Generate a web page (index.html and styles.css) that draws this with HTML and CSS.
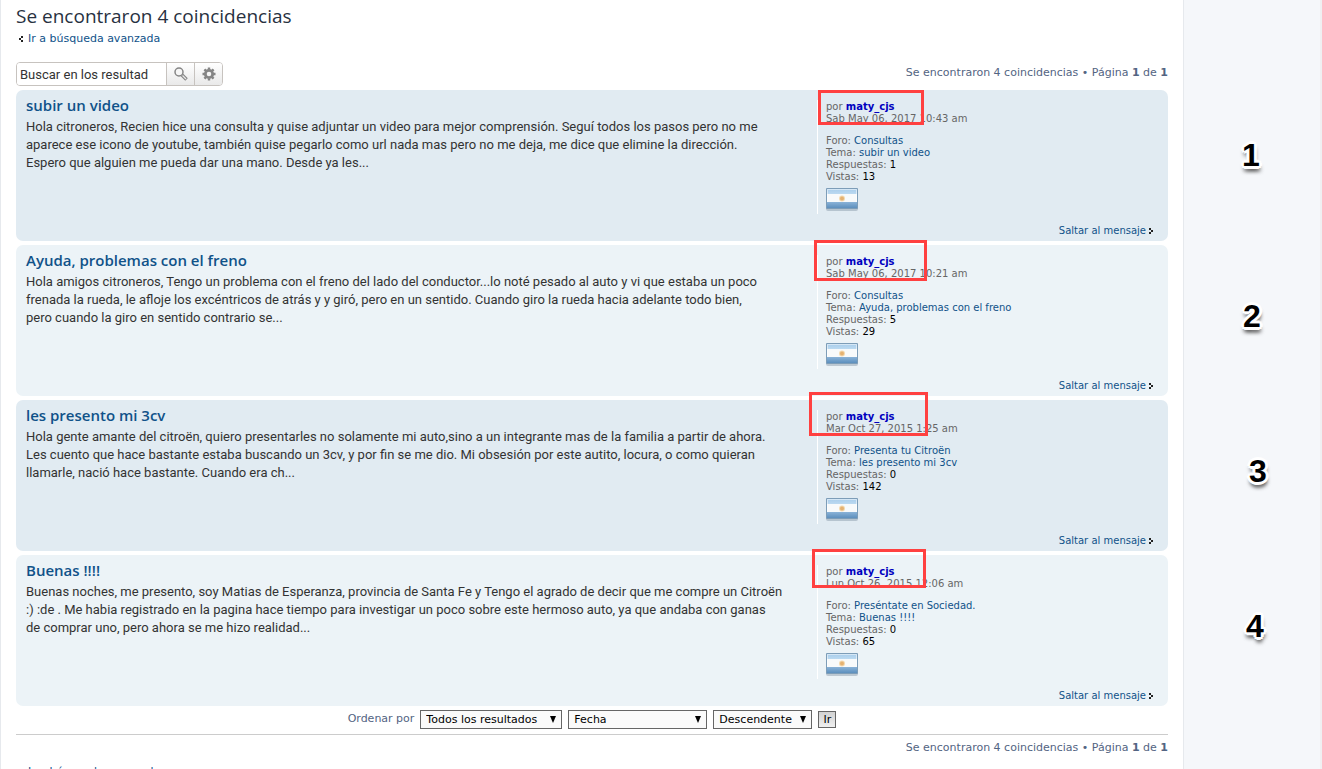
FILE: index.html
```html
<!DOCTYPE html>
<html lang="es">
<head>
<meta charset="utf-8">
<title>Se encontraron 4 coincidencias</title>
<link rel="stylesheet" href="styles.css">
</head>
<body>
<svg class="defs" aria-hidden="true">
  <defs>
    <linearGradient id="sky-top" x1="0" y1="0" x2="0" y2="1"><stop offset="0" stop-color="#a9cdeb"/><stop offset="1" stop-color="#bfdcf2"/></linearGradient>
    <linearGradient id="sky-bottom" x1="0" y1="0" x2="0" y2="1"><stop offset="0" stop-color="#8ab3d8"/><stop offset="1" stop-color="#5d8fbd"/></linearGradient>
  </defs>
  <symbol id="flag" viewBox="0 0 32 24">
    <rect x="0" y="2" width="32" height="21" rx="2" fill="#8395a3" opacity=".45"/>
    <rect x="0" y="0" width="32" height="21" rx="1" fill="#7d9db8"/>
    <rect x="1" y="1" width="30" height="6" fill="url(#sky-top)"/>
    <rect x="1" y="6" width="30" height="9" fill="#f8fafb"/>
    <rect x="1" y="14" width="30" height="6" fill="url(#sky-bottom)"/>
    <path d="M1.500 14V1.500h29V14" fill="none" stroke="#fff" opacity=".5"/>
    <circle cx="16" cy="10.500" r="3" fill="#f4d9ae"/>
    <circle cx="16" cy="10.500" r="2" fill="#e5b272"/>
  </symbol>
  <symbol id="arrow-left" viewBox="0 0 4 6"><path d="M2 0h2v2H2zM0 2h2v2H0zM2 4h2v2H2z" fill="#222"/></symbol>
  <symbol id="arrow-right" viewBox="0 0 4 6"><path d="M0 0h2v2H0zM2 2h2v2H2zM0 4h2v2H0z" fill="#222"/></symbol>
</svg>
<div class="layout">
<main class="page">
  <h2 class="heading">Se encontraron 4 coincidencias</h2>
  <a class="back" href="#"><svg class="arrow"><use href="#arrow-left"/></svg>Ir a búsqueda avanzada</a>

  <div class="action-bar">
    <form class="search">
      <input class="search-input" type="text" aria-label="Buscar en los resultados" value="Buscar en los resultad">
      <button class="search-button" type="button" aria-label="Buscar">
        <svg width="16" height="16" viewBox="0 0 16 16"><circle cx="6" cy="6" r="4" fill="#f6f6f6" stroke="#858585" stroke-width="1.500"/><path d="M9 9l4.500 4.500" stroke="#858585" stroke-width="3.500"/><path d="M9.500 9.500l3.500 3.500" stroke="#e8e8e8" stroke-width="1.200"/></svg>
      </button>
      <button class="search-button" type="button" aria-label="Búsqueda avanzada">
        <svg width="14" height="14" viewBox="0 0 14 14"><circle cx="7" cy="7" r="3.700" fill="none" stroke="#858585" stroke-width="2.800"/><path d="M7 .5v2M7 11.500v2M.5 7h2M11.500 7h2M2.400 2.400l1.500 1.500M10.100 10.100l1.500 1.500M2.400 11.600l1.500-1.500M10.100 3.900l1.500-1.500" stroke="#858585" stroke-width="2.400"/></svg>
      </button>
    </form>
    <p class="pagination">Se encontraron 4 coincidencias • Página <strong>1</strong> de <strong>1</strong></p>
  </div>

  <div class="results">
    <article class="post">
      <div class="post-body">
        <h3 class="post-title"><a href="#">subir un video</a></h3>
        <p class="post-text">Hola citroneros, Recien hice una consulta y quise adjuntar un video para mejor comprensión. Seguí todos los pasos pero no me<br>aparece ese icono de youtube, también quise pegarlo como url nada mas pero no me deja, me dice que elimine la dirección.<br>Espero que alguien me pueda dar una mano. Desde ya les...</p>
      </div>
      <div class="profile">
        <p>por <a class="author" href="#">maty_cjs</a></p>
        <p>Sab May 06, 2017 10:43 am</p>
        <p class="forum">Foro: <a href="#">Consultas</a></p>
        <p>Tema: <a href="#">subir un video</a></p>
        <p>Respuestas: <span class="count">1</span></p>
        <p>Vistas: <span class="count">13</span></p>
        <svg class="flag" role="img" aria-label="Argentina"><use href="#flag"/></svg>
        <span class="mark mark-1"></span>
      </div>
      <a class="jump" href="#">Saltar al mensaje<svg class="arrow"><use href="#arrow-right"/></svg></a>
    </article>

    <article class="post post-alt">
      <div class="post-body">
        <h3 class="post-title"><a href="#">Ayuda, problemas con el freno</a></h3>
        <p class="post-text">Hola amigos citroneros, Tengo un problema con el freno del lado del conductor...lo noté pesado al auto y vi que estaba un poco<br>frenada la rueda, le afloje los excéntricos de atrás y y giró, pero en un sentido. Cuando giro la rueda hacia adelante todo bien,<br>pero cuando la giro en sentido contrario se...</p>
      </div>
      <div class="profile">
        <p>por <a class="author" href="#">maty_cjs</a></p>
        <p>Sab May 06, 2017 10:21 am</p>
        <p class="forum">Foro: <a href="#">Consultas</a></p>
        <p>Tema: <a href="#">Ayuda, problemas con el freno</a></p>
        <p>Respuestas: <span class="count">5</span></p>
        <p>Vistas: <span class="count">29</span></p>
        <svg class="flag" role="img" aria-label="Argentina"><use href="#flag"/></svg>
        <span class="mark mark-2"></span>
      </div>
      <a class="jump" href="#">Saltar al mensaje<svg class="arrow"><use href="#arrow-right"/></svg></a>
    </article>

    <article class="post">
      <div class="post-body">
        <h3 class="post-title"><a href="#">les presento mi 3cv</a></h3>
        <p class="post-text">Hola gente amante del citroën, quiero presentarles no solamente mi auto,sino a un integrante mas de la familia a partir de ahora.<br>Les cuento que hace bastante estaba buscando un 3cv, y por fin se me dio. Mi obsesión por este autito, locura, o como quieran<br>llamarle, nació hace bastante. Cuando era ch...</p>
      </div>
      <div class="profile">
        <p>por <a class="author" href="#">maty_cjs</a></p>
        <p>Mar Oct 27, 2015 1:25 am</p>
        <p class="forum">Foro: <a href="#">Presenta tu Citroën</a></p>
        <p>Tema: <a href="#">les presento mi 3cv</a></p>
        <p>Respuestas: <span class="count">0</span></p>
        <p>Vistas: <span class="count">142</span></p>
        <svg class="flag" role="img" aria-label="Argentina"><use href="#flag"/></svg>
        <span class="mark mark-3"></span>
      </div>
      <a class="jump" href="#">Saltar al mensaje<svg class="arrow"><use href="#arrow-right"/></svg></a>
    </article>

    <article class="post post-alt">
      <div class="post-body">
        <h3 class="post-title"><a href="#">Buenas !!!!</a></h3>
        <p class="post-text">Buenas noches, me presento, soy Matias de Esperanza, provincia de Santa Fe y Tengo el agrado de decir que me compre un Citroën<br>:) :de . Me habia registrado en la pagina hace tiempo para investigar un poco sobre este hermoso auto, ya que andaba con ganas<br>de comprar uno, pero ahora se me hizo realidad...</p>
      </div>
      <div class="profile">
        <p>por <a class="author" href="#">maty_cjs</a></p>
        <p>Lun Oct 26, 2015 12:06 am</p>
        <p class="forum">Foro: <a href="#">Preséntate en Sociedad.</a></p>
        <p>Tema: <a href="#">Buenas !!!!</a></p>
        <p>Respuestas: <span class="count">0</span></p>
        <p>Vistas: <span class="count">65</span></p>
        <svg class="flag" role="img" aria-label="Argentina"><use href="#flag"/></svg>
        <span class="mark mark-4"></span>
      </div>
      <a class="jump" href="#">Saltar al mensaje<svg class="arrow"><use href="#arrow-right"/></svg></a>
    </article>
  </div>

  <form class="sort">
    <label class="sort-label" for="range">Ordenar por</label>
    <span class="picker picker-range"><select id="range"><option>Todos los resultados</option></select></span>
    <span class="picker picker-field"><select aria-label="Campo"><option>Fecha</option></select></span>
    <span class="picker picker-order"><select aria-label="Dirección"><option>Descendente</option></select></span>
    <button class="go" type="button">Ir</button>
  </form>
  <p class="pagination pagination-end">Se encontraron 4 coincidencias • Página <strong>1</strong> de <strong>1</strong></p>
  <a class="back" href="#"><svg class="arrow"><use href="#arrow-left"/></svg>Ir a búsqueda avanzada</a>
</main>
<aside class="side">
  <span class="number number-1">1</span>
  <span class="number number-2">2</span>
  <span class="number number-3">3</span>
  <span class="number number-4">4</span>
</aside>
</div>
</body>
</html>
```
FILE: styles.css
```css
* { box-sizing: border-box; }
html { scrollbar-width: none; }
body {
  margin: 0;
  background: #f5f7fa;
  color: #536482;
  font: 11px/14px "DejaVu Sans", Verdana, sans-serif;
}
h2, h3, p { margin: 0; }
a { color: #105289; text-decoration: none; }
.defs { position: absolute; width: 0; height: 0; }

.layout {
  display: grid;
  grid-template-columns: 1fr 138px;
  min-height: 100vh;
}
.page {
  padding: 4px 15px 0;
  background: #fff;
  border: solid #e6e9ed;
  border-width: 0 1px;
}
.side { position: relative; border-right: 2px solid #f0f0f2; }

.heading {
  color: #28313f;
  font: 400 19px/24px "Open Sans", "Trebuchet MS", sans-serif;
}
.back { display: flex; align-items: center; gap: 5px; margin-top: 4px; padding-left: 3px; }
.arrow { width: 4px; height: 6px; }

.action-bar { display: flex; justify-content: space-between; margin: 16px 0 4px; }
.pagination { padding-top: 4px; text-align: right; }
.search {
  display: flex;
  height: 24px;
  border: 1px solid #c7c3bf;
  border-radius: 4px;
  overflow: hidden;
}
.search-input {
  width: 149px;
  padding: 0 3px;
  border: 0;
  background: #fff;
  color: #333;
  font: 13px Roboto, "Trebuchet MS", sans-serif;
}
.search-button {
  display: flex;
  align-items: center;
  justify-content: center;
  width: 28px;
  padding: 0;
  border: 0;
  border-left: 1px solid #c7c3bf;
  background: linear-gradient(#fff, #e9e9e9);
}

.results { display: grid; gap: 4px; }
.post {
  display: grid;
  grid-template-columns: minmax(0, 1fr) 341px;
  padding: 5px 10px 4px;
  border-radius: 7px;
  background: #e1ebf2;
}
.post-alt { background: #ecf3f7; }
.post-title { font: 600 15px/21px "Open Sans", "Trebuchet MS", sans-serif; }
.post-text {
  margin-top: 2px;
  color: #333;
  font: 13px/18px Roboto, "Trebuchet MS", sans-serif;
  white-space: nowrap;
}
.profile {
  position: relative;
  margin-top: 5px;
  padding: 1px 0 2px 8px;
  border-left: 1px solid #fff;
  color: #666;
  font-size: 10px;
  line-height: 12px;
}
.forum { margin-top: 10px; }
.count { color: #000; }
.author { color: #0000bf; font-weight: 700; }
.flag { display: block; width: 32px; height: 24px; margin-top: 5px; }
.jump {
  display: flex;
  grid-column: 1 / -1;
  align-items: center;
  justify-self: end;
  gap: 3px;
  margin: 11px 5px 0 0;
  font-size: 10px;
  line-height: 12px;
}

/* Red frames laid over the author names */
.mark { position: absolute; border: 3px solid #ff4040; }
.mark-1 { top: -10px; left: 0; width: 106px; height: 35px; }
.mark-2 { top: -15px; left: -4px; width: 113px; height: 41px; }
.mark-3 { top: -18px; left: -9px; width: 119px; height: 44px; }
.mark-4 { top: -16px; left: -6px; width: 114px; height: 39px; }

.sort { display: flex; gap: 6px; justify-content: center; padding: 4px 0 5px; border-bottom: 1px solid #ccc; }
.sort-label { line-height: 17px; }
.picker { position: relative; color: #000; }
.picker::after {
  content: "";
  position: absolute;
  top: 6px;
  right: 6px;
  border: solid transparent;
  border-width: 7px 3px 0;
  border-top-color: #000;
  pointer-events: none;
}
.picker select {
  display: block;
  width: 100%;
  height: 19px;
  padding: 1px 5px;
  appearance: none;
  border: 1px solid #666;
  border-radius: 0;
  background: #fafafa;
  color: #000;
  font: 11px "DejaVu Sans", Verdana, sans-serif;
}
.picker-range { width: 142px; }
.picker-field { width: 139px; }
.picker-order { width: 99px; }
.go {
  align-self: center;
  width: 18px;
  height: 17px;
  padding: 0;
  border: 1px solid #666;
  background: linear-gradient(#d2d2d2, #efefef);
  color: #000;
  font: 11px "DejaVu Sans", Verdana, sans-serif;
}
.pagination-end { padding-top: 6px; }
.pagination-end + .back { margin-top: 10px; }

.number {
  position: absolute;
  color: #000;
  font: 700 32px/36px "Liberation Sans", Arial, sans-serif;
  text-shadow: 3px 0 #fff, -3px 0 #fff, 0 3px #fff, 0 -3px #fff, 2px 2px #fff, -2px 2px #fff, 2px -2px #fff, -2px -2px #fff, 1px 5px 4px #555, 0 4px 4px #777;
}
.number-1 { top: 137px; left: 58px; }
.number-2 { top: 298px; left: 59px; }
.number-3 { top: 453px; left: 65px; }
.number-4 { top: 608px; left: 62px; }
```
